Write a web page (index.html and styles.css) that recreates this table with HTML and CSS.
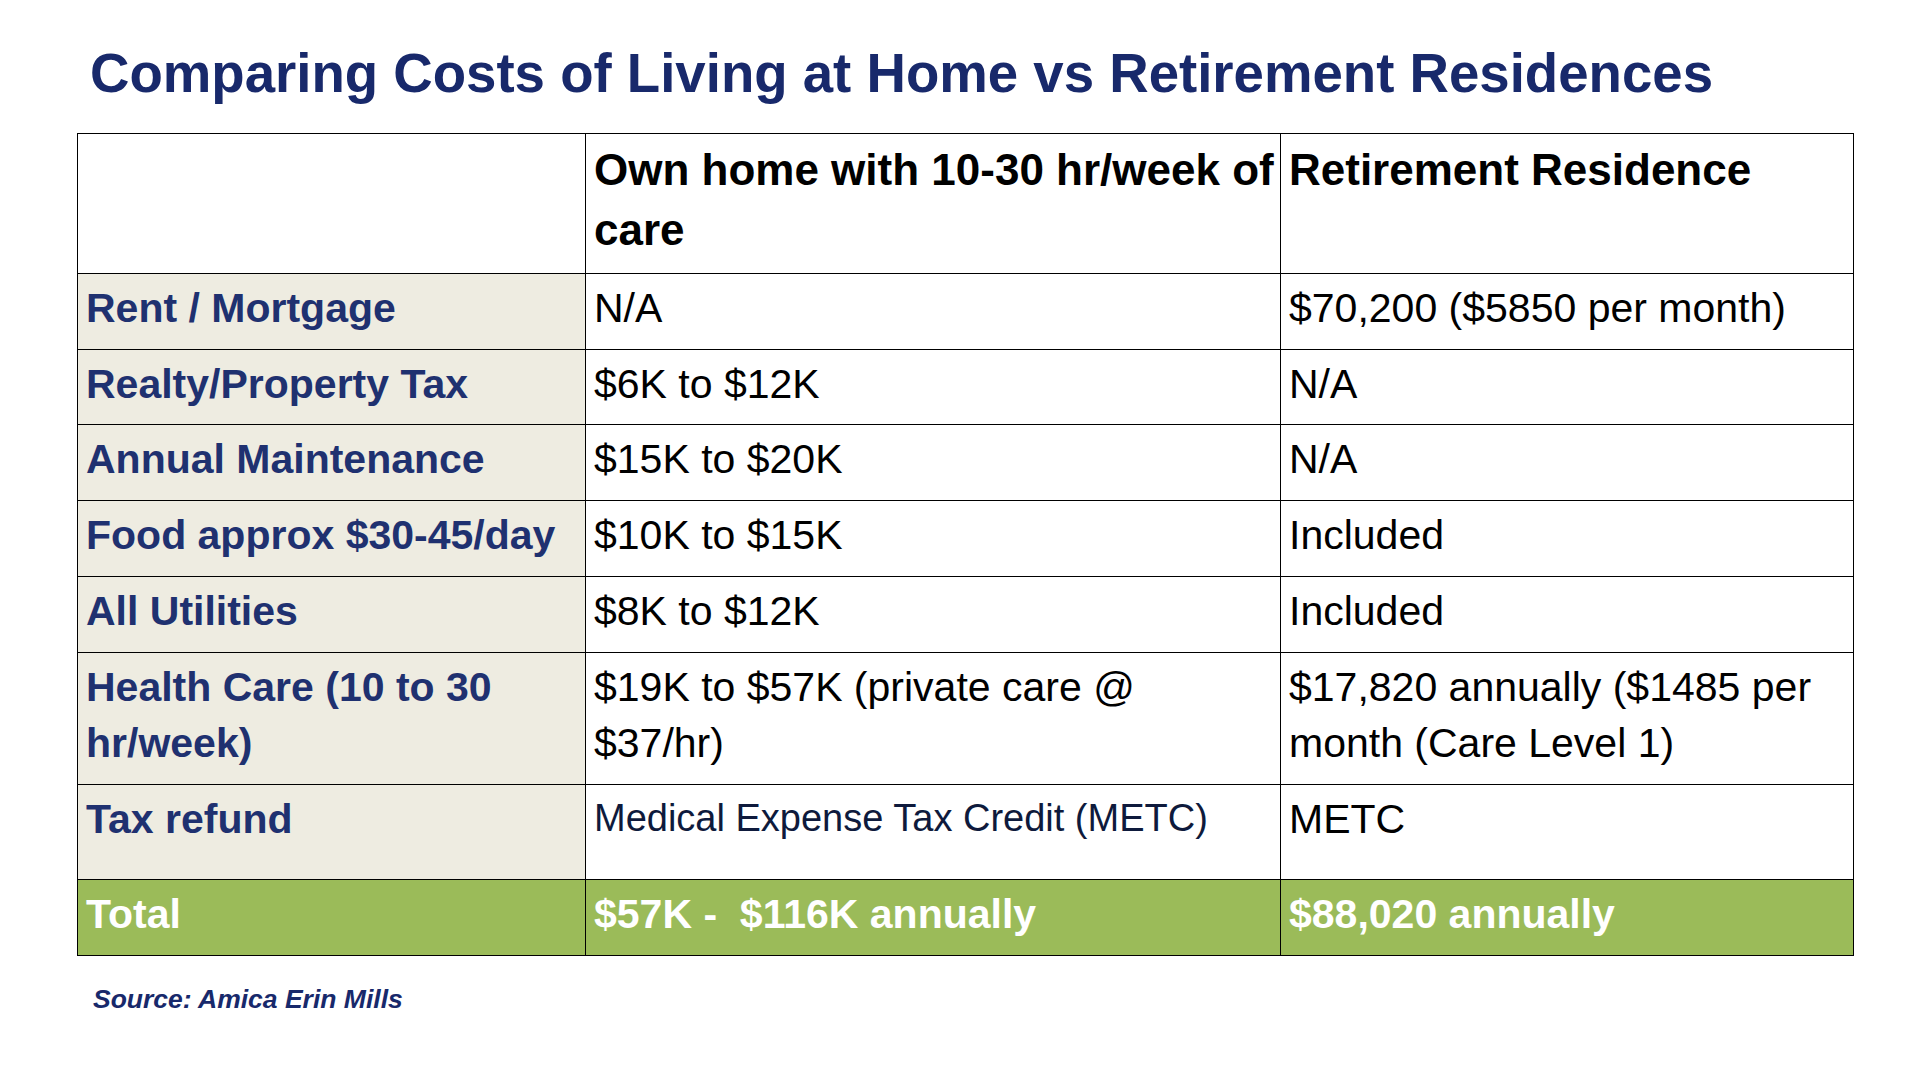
FILE: index.html
```html
<!DOCTYPE html>
<html lang="en">
<head>
<meta charset="utf-8">
<title>Comparing Costs of Living at Home vs Retirement Residences</title>
<link rel="stylesheet" href="styles.css">
</head>
<body>
<main class="slide">
  <h1 class="title">Comparing Costs of Living at Home vs Retirement Residences</h1>
  <table class="costs">
    <colgroup>
      <col class="c1">
      <col class="c2">
      <col class="c3">
    </colgroup>
    <tr class="head">
      <th class="blank"></th>
      <th>Own home with 10-30 hr/week of care</th>
      <th>Retirement Residence</th>
    </tr>
    <tr class="row">
      <td class="label">Rent / Mortgage</td>
      <td>N/A</td>
      <td>$70,200 ($5850 per month)</td>
    </tr>
    <tr class="row">
      <td class="label">Realty/Property Tax</td>
      <td>$6K to $12K</td>
      <td>N/A</td>
    </tr>
    <tr class="row">
      <td class="label">Annual Maintenance</td>
      <td>$15K to $20K</td>
      <td>N/A</td>
    </tr>
    <tr class="row">
      <td class="label">Food approx $30-45/day</td>
      <td>$10K to $15K</td>
      <td>Included</td>
    </tr>
    <tr class="row">
      <td class="label">All Utilities</td>
      <td>$8K to $12K</td>
      <td>Included</td>
    </tr>
    <tr class="row tall">
      <td class="label">Health Care (10 to 30 hr/week)</td>
      <td>$19K to $57K (private care @ $37/hr)</td>
      <td>$17,820 annually ($1485 per month (Care Level 1)</td>
    </tr>
    <tr class="row tax">
      <td class="label">Tax refund</td>
      <td class="small">Medical Expense Tax Credit (METC)</td>
      <td>METC</td>
    </tr>
    <tr class="row total">
      <td>Total</td>
      <td>$57K - &nbsp;$116K annually</td>
      <td>$88,020 annually</td>
    </tr>
  </table>
  <p class="source">Source: Amica Erin Mills</p>
</main>
</body>
</html>
```

FILE: styles.css
```css
html, body {
  margin: 0;
  padding: 0;
  background: #ffffff;
}

.slide {
  width: 1920px;
  height: 1080px;
  box-sizing: border-box;
  padding: 42px 0 0 77px;
  font-family: "Liberation Sans", Arial, sans-serif;
}

.title {
  margin: 0 0 27px 13px;
  font-size: 54.6px;
  line-height: 64px;
  font-weight: 700;
  color: #18296b;
  white-space: nowrap;
}

.costs {
  border-collapse: collapse;
  table-layout: fixed;
  width: 1776px;
}

.c1 { width: 508px; }
.c2 { width: 695px; }
.c3 { width: 573px; }

.costs th,
.costs td {
  border: 1.5px solid #000000;
  padding: 6px 4px 0 8px;
  vertical-align: top;
  text-align: left;
  font-size: 41px;
  line-height: 56px;
  color: #000000;
  background: #ffffff;
}

.head th {
  height: 132.75px;
  font-size: 44px;
  line-height: 60px;
  font-weight: 700;
  padding-right: 0;
}

.row td {
  height: 68.75px;
}

.row.tall td {
  height: 125.75px;
}

.row.tax td {
  height: 86.75px;
}

.costs td.label {
  background: #eeece1;
  color: #1f3170;
  font-weight: 700;
}

.costs td.small {
  font-size: 38px;
  line-height: 52px;
  padding-top: 7px;
  color: #0e1a3c;
}

.row.total td {
  background: #9bbb59;
  color: #ffffff;
  font-weight: 700;
}

.source {
  margin: 27px 0 0 16px;
  font-size: 26.5px;
  line-height: 32px;
  font-weight: 700;
  font-style: italic;
  color: #18296b;
}
```
